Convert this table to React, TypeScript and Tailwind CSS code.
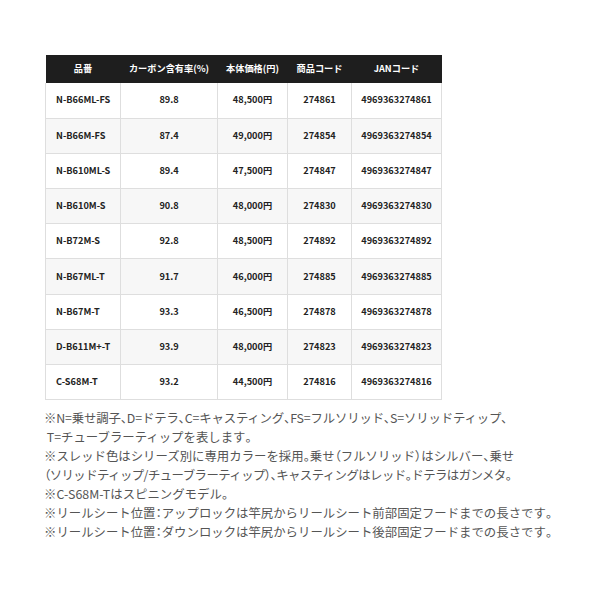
import type { ReactNode } from 'react';

const ROWS = [
  ['N-B66ML-FS', '89.8', '48,500円', '274861', '4969363274861'],
  ['N-B66M-FS', '87.4', '49,000円', '274854', '4969363274854'],
  ['N-B610ML-S', '89.4', '47,500円', '274847', '4969363274847'],
  ['N-B610M-S', '90.8', '48,000円', '274830', '4969363274830'],
  ['N-B72M-S', '92.8', '48,500円', '274892', '4969363274892'],
  ['N-B67ML-T', '91.7', '46,000円', '274885', '4969363274885'],
  ['N-B67M-T', '93.3', '46,500円', '274878', '4969363274878'],
  ['D-B611M+-T', '93.9', '48,000円', '274823', '4969363274823'],
  ['C-S68M-T', '93.2', '44,500円', '274816', '4969363274816'],
];

const HEADERS = ['品番', 'カーボン含有率(%)', '本体価格(円)', '商品コード', 'JANコード'];
const WIDTHS = ['w-[75px]', 'w-[97px]', 'w-[70px]', 'w-[64px]', 'w-[90px]'];

const NOTES: { text: string; track: string }[] = [
  { text: '※N=乗せ調子、D=ドテラ、C=キャスティング、FS=フルソリッド、S=ソリッドティップ、', track: 'tracking-[-0.15px]' },
  { text: '\u00a0T=チューブラーティップを表します。', track: '' },
  { text: '※スレッド色はシリーズ別に専用カラーを採用。乗せ（フルソリッド）はシルバー、乗せ', track: '' },
  { text: '（ソリッドティップ/チューブラーティップ）、キャスティングはレッド。ドテラはガンメタ。', track: 'tracking-[-0.55px]' },
  { text: '※C-S68M-Tはスピニングモデル。', track: '' },
  { text: '※リールシート位置：アップロックは竿尻からリールシート前部固定フードまでの長さです。', track: '' },
  { text: '※リールシート位置：ダウンロックは竿尻からリールシート後部固定フードまでの長さです。', track: '' },
];

// punctuation in the notes is set half-width, kana and kanji stay full-width
function Note({ text, track }: { text: string; track: string }) {
  const parts: ReactNode[] = [];
  let buf = '';
  text.split('').forEach((ch, i) => {
    if ('、。（）：'.includes(ch)) {
      if (buf) parts.push(buf);
      buf = '';
      parts.push(
        <span key={i} className="[font-feature-settings:'palt']">
          {ch}
        </span>
      );
    } else {
      buf += ch;
    }
  });
  if (buf) parts.push(buf);
  return <div className={`whitespace-nowrap ${track}`}>{parts}</div>;
}

export default function App() {
  return (
    <div className="w-[600px] h-[600px] bg-white pt-[55px] pl-[45px] font-['Noto_Sans_CJK_JP',sans-serif]">
      <table className="border-collapse text-[9.2px] font-bold text-[#222]">
        <thead>
          <tr className="bg-[#1e1e1e] text-white h-[28px]">
            {HEADERS.map((h, i) => (
              <th key={h} className={`${WIDTHS[i]} p-0 text-center font-bold`}>
                {h}
              </th>
            ))}
          </tr>
        </thead>
        <tbody>
          {ROWS.map((row, r) => (
            <tr key={row[0]} className={`h-[35.2px] ${r % 2 === 1 ? 'bg-[#f7f7f7]' : 'bg-white'}`}>
              {row.map((cell, c) => (
                <td
                  key={c}
                  className={`p-0 border border-[#dedede] ${
                    c === 0 ? 'text-left pl-[10px]' : 'text-center'
                  } ${r === 0 ? 'border-t-0' : ''}`}
                >
                  {cell}
                </td>
              ))}
            </tr>
          ))}
        </tbody>
      </table>
      <div className="mt-[9px] -ml-[1px] text-[12.4px] leading-[19px] text-[#555]">
        {NOTES.map((n) => (
          <Note key={n.text} text={n.text} track={n.track} />
        ))}
      </div>
    </div>
  );
}
